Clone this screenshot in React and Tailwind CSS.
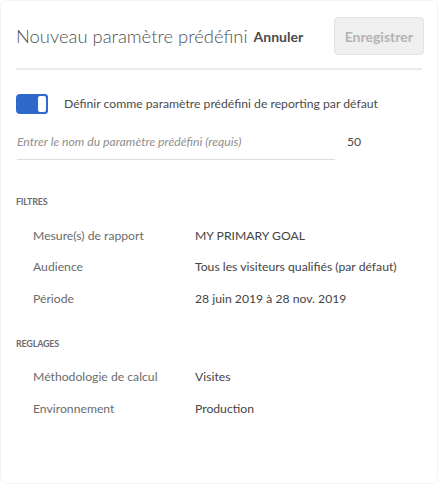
export default function App() {
  const filtres = [
    ['Mesure(s) de rapport', 'MY PRIMARY GOAL'],
    ['Audience', 'Tous les visiteurs qualifiés (par défaut)'],
    ['Période', '28 juin 2019 à 28 nov. 2019'],
  ];
  const reglages = [
    ['Méthodologie de calcul', 'Visites'],
    ['Environnement', 'Production'],
  ];

  return (
    <div className="w-[438px] h-[484px] bg-white rounded-md border border-[#f4f4f4] font-['Lato',sans-serif] text-[#4b4b4b] overflow-hidden">
      <div className="flex items-center pl-[15px] pr-[13px] pt-[16px] pb-[13px]">
        <h1 className="text-[18.4px] font-light text-[#505050] leading-none">Nouveau paramètre prédéfini</h1>
        <button className="ml-[6px] text-[14px] font-bold text-[#4b4b4b]">Annuler</button>
        <button className="ml-auto h-[38px] px-[10px] rounded bg-[#efefef] border border-[#e2e2e2] text-[14px] font-bold text-[#b3b3b3]">
          Enregistrer
        </button>
      </div>
      <div className="mx-[15px] h-[2px] bg-[#eaeaea]" />

      <div className="flex items-center pl-[15px] mt-[24px]">
        <div className="w-[32px] h-[20px] rounded-[4px] bg-[#2d6acb] flex justify-end">
          <div className="w-[12px] h-[20px] rounded-[4px] bg-white border-2 border-[#2d6acb]" />
        </div>
        <span className="ml-[16px] text-[12.2px] text-[#4b4b4b]">
          Définir comme paramètre prédéfini de reporting par défaut
        </span>
      </div>

      <div className="flex items-start pl-[16px] mt-[20px] text-[12.2px] leading-[16px]">
        <div className="w-[318px] border-b border-[#dcdcdc] pb-[9px] italic text-[#8e8e8e]">
          Entrer le nom du paramètre prédéfini (requis)
        </div>
        <div className="ml-[12px] text-[#4b4b4b]">50</div>
      </div>

      <Section title="FILTRES" rows={filtres} top="mt-[35px]" />
      <Section title="REGLAGES" rows={reglages} top="mt-[29px]" />
    </div>
  );
}

function Section({ title, rows, top }) {
  return (
    <div className={top}>
      <div className="pl-[15px] text-[9px] font-bold text-[#6e6e6e] tracking-tight">{title}</div>
      <div className="mt-[17px] flex flex-col gap-[12.5px]">
        {rows.map(([k, v]) => (
          <div key={k} className="flex pl-[32px] text-[12.2px] leading-[19px]">
            <span className="w-[162px] text-[#6b6b6b]">{k}</span>
            <span className="text-[#444]">{v}</span>
          </div>
        ))}
      </div>
    </div>
  );
}
